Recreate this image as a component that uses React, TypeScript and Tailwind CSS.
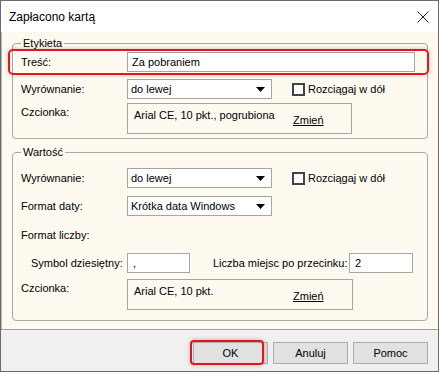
import { ReactNode } from 'react'

const font = "font-['Liberation_Sans',Arial,sans-serif]"

function Select({ value }: { value: string }) {
  return (
    <div className="flex h-[20px] w-[145px] items-center justify-between border border-[#a5a5a5] bg-white pl-[3px] pr-[6px]">
      <span>{value}</span>
      <svg width="9" height="5" viewBox="0 0 9 5">
        <path d="M0 0h9L4.5 5z" fill="#000" />
      </svg>
    </div>
  )
}

function Checkbox({ label }: { label: string }) {
  return (
    <div className="ml-[20px] flex items-center gap-[3px]">
      <span className="h-[13px] w-[13px] border-2 border-[#444] bg-white" />
      <span>{label}</span>
    </div>
  )
}

function Label({ children, className = '' }: { children: ReactNode; className?: string }) {
  return <div className={`w-[106px] shrink-0 leading-[14px] ${className}`}>{children}</div>
}

function FontBox({ text, width }: { text: string; width: string }) {
  return (
    <div className={`flex h-[31px] items-start border border-[#a5a5a5] ${width}`}>
      <div className="w-[165px] shrink-0 pl-[6px] pt-[4px] leading-[14px]">{text}</div>
      <div className="pt-[9px] leading-[14px] underline">Zmień</div>
    </div>
  )
}

function Group({ title, children, className = '' }: { title: string; children: ReactNode; className?: string }) {
  return (
    <fieldset className={`rounded-[4px] border border-[#a8a8a8] px-[8px] ${className}`}>
      <legend className="px-[2px] leading-[14px]">{title}</legend>
      {children}
    </fieldset>
  )
}

function Button({ children }: { children: ReactNode }) {
  return (
    <button
      type="button"
      className="flex h-[22px] w-[75px] items-center justify-center border border-[#adadad] bg-[#e1e1e1]"
    >
      {children}
    </button>
  )
}

export default function App() {
  return (
    <div className={`relative flex h-[372px] w-[439px] flex-col whitespace-nowrap border border-[#6b6b6b] bg-[#fffaf0] text-[11px] text-black ${font}`}>
      <div className="flex h-[31px] items-center justify-between bg-white pl-[8px] pr-[8px]">
        <span className="text-[12px]">Zapłacono kartą</span>
        <svg width="12" height="12" viewBox="0 0 12 12" className="mr-[1px]">
          <path d="M0.5 0.5l11 11M11.5 0.5l-11 11" stroke="#222" strokeWidth="1" />
        </svg>
      </div>

      <div className="flex-1 border-l border-[#b5b5b5] pl-[10px] pr-[10px] pt-[4px]">
        <Group title="Etykieta" className="pb-[4px]">
          <div className="mt-[2px] flex h-[20px] items-center">
            <Label>Treść:</Label>
            <div className="flex h-[20px] w-[288px] items-center border border-[#a5a5a5] bg-white pl-[4px]">Za pobraniem</div>
          </div>
          <div className="mt-[7px] flex h-[20px] items-center">
            <Label>Wyrównanie:</Label>
            <Select value="do lewej" />
            <Checkbox label="Rozciągaj w dół" />
          </div>
          <div className="mt-[4px] flex items-start">
            <Label className="pt-[2px]">Czcionka:</Label>
            <FontBox text="Arial CE, 10 pkt., pogrubiona" width="w-[225px]" />
          </div>
        </Group>

        <Group title="Wartość" className="mt-[6px] pb-[10px]">
          <div className="mt-[9px] flex h-[20px] items-center">
            <Label>Wyrównanie:</Label>
            <Select value="do lewej" />
            <Checkbox label="Rozciągaj w dół" />
          </div>
          <div className="mt-[8px] flex h-[20px] items-center">
            <Label>Format daty:</Label>
            <Select value="Krótka data Windows" />
          </div>
          <div className="mt-[9px] flex h-[20px] items-center">
            <Label>Format liczby:</Label>
          </div>
          <div className="mt-[8px] flex h-[20px] items-center">
            <Label className="pl-[10px]">Symbol dziesiętny:</Label>
            <div className="flex h-[20px] w-[63px] items-center border border-[#a5a5a5] bg-white pl-[5px]">,</div>
            <span className="ml-[23px] w-[136px]">Liczba miejsc po przecinku:</span>
            <div className="flex h-[20px] w-[64px] items-center border border-[#a5a5a5] bg-white pl-[5px]">2</div>
          </div>
          <div className="mt-[6px] flex items-start">
            <Label className="pt-[2px]">Czcionka:</Label>
            <FontBox text="Arial CE, 10 pkt." width="w-[226px]" />
          </div>
        </Group>
      </div>

      <div className="flex h-[42px] items-start justify-end gap-[5px] border-t border-[#a0a0a0] bg-[#f0f0f0] pr-[10px] pt-[12px]">
        <Button>OK</Button>
        <Button>Anuluj</Button>
        <Button>Pomoc</Button>
      </div>

      <div className="pointer-events-none absolute left-[7px] top-[48px] h-[26px] w-[421px] rounded-[5px] border-2 border-[#e8141c] shadow-[0_0_4px_rgba(0,0,0,0.25)]" />
      <div className="pointer-events-none absolute left-[189px] top-[339px] h-[25px] w-[74px] rounded-[4px] border-2 border-[#e8141c] shadow-[0_0_4px_rgba(0,0,0,0.25)]" />
    </div>
  )
}
